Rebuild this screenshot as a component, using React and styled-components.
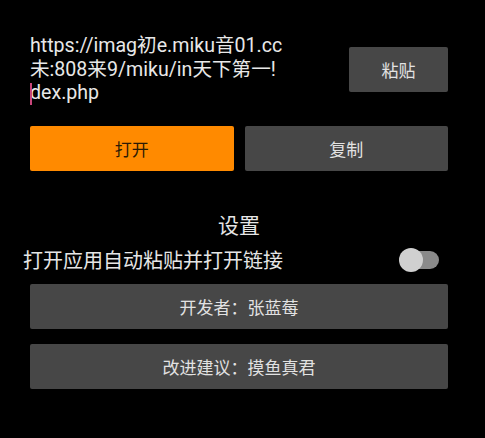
import React, { useState } from "react";
import styled, { createGlobalStyle } from "styled-components";

const GlobalStyle = createGlobalStyle`
  html, body {
    margin: 0;
    padding: 0;
    background: #000;
  }
  body {
    font-family: Roboto, "Noto Sans CJK SC", sans-serif;
    color: #e4e4e4;
  }
`;

const Page = styled.div`
  width: 485px;
  height: 438px;
  background: #000;
  padding: 34px 37px 0 30px;
  box-sizing: border-box;
`;

const TopRow = styled.div`
  display: flex;
  align-items: center;
  justify-content: space-between;
`;

const UrlBox = styled.div`
  position: relative;
  font-size: 19.6px;
  line-height: 23.5px;
  color: #e8e8e8;
`;

const UrlLine = styled.div`
  white-space: nowrap;
`;

const Cursor = styled.span`
  position: absolute;
  left: 0;
  top: 49px;
  width: 2px;
  height: 22px;
  background: #c8467a;
`;

const Btn = styled.button`
  border: none;
  border-radius: 2px;
  height: 45px;
  width: ${(p) => p.$w || "auto"};
  background: ${(p) => (p.$primary ? "#ff8a00" : "#474747")};
  color: ${(p) => (p.$primary ? "#2b1a05" : "#e2e2e2")};
  font-family: Roboto, "Noto Sans CJK SC", sans-serif;
  font-size: 17px;
  padding: 0;
  cursor: pointer;
`;

const ActionRow = styled.div`
  display: grid;
  grid-template-columns: 1fr 1fr;
  gap: 11px;
  margin-top: 21px;
`;

const Title = styled.div`
  text-align: center;
  font-size: 21px;
  margin-top: 41px;
  line-height: 28px;
  color: #e6e6e6;
`;

const SwitchRow = styled.div`
  display: flex;
  align-items: center;
  justify-content: space-between;
  margin-left: -7px;
  margin-right: 9px;
  height: 30px;
  margin-top: 5px;
`;

const SwitchLabel = styled.span`
  font-size: 20px;
  color: #e6e6e6;
`;

const Track = styled.div`
  position: relative;
  width: 30px;
  height: 18px;
  border-radius: 9px;
  background: #8a8a8a;
  margin-left: 10px;
`;

const Thumb = styled.div`
  position: absolute;
  left: ${(p) => (p.$on ? "17px" : "-10px")};
  top: -3px;
  width: 24px;
  height: 24px;
  border-radius: 50%;
  background: #d0d0d0;
`;

const InfoList = styled.div`
  display: flex;
  flex-direction: column;
  gap: 15px;
  margin-top: 9px;
`;

export default function App() {
  const [on, setOn] = useState(false);
  return (
    <>
      <GlobalStyle />
      <Page>
        <TopRow>
          <UrlBox>
            <UrlLine>https://imag初e.miku音01.cc</UrlLine>
            <UrlLine>未:808来9/miku/in天下第一!</UrlLine>
            <UrlLine>dex.php</UrlLine>
            <Cursor />
          </UrlBox>
          <Btn $w="99px">粘贴</Btn>
        </TopRow>
        <ActionRow>
          <Btn $primary>打开</Btn>
          <Btn>复制</Btn>
        </ActionRow>
        <Title>设置</Title>
        <SwitchRow>
          <SwitchLabel>打开应用自动粘贴并打开链接</SwitchLabel>
          <Track onClick={() => setOn(!on)}>
            <Thumb $on={on} />
          </Track>
        </SwitchRow>
        <InfoList>
          <Btn>开发者：张蓝莓</Btn>
          <Btn>改进建议：摸鱼真君</Btn>
        </InfoList>
      </Page>
    </>
  );
}
